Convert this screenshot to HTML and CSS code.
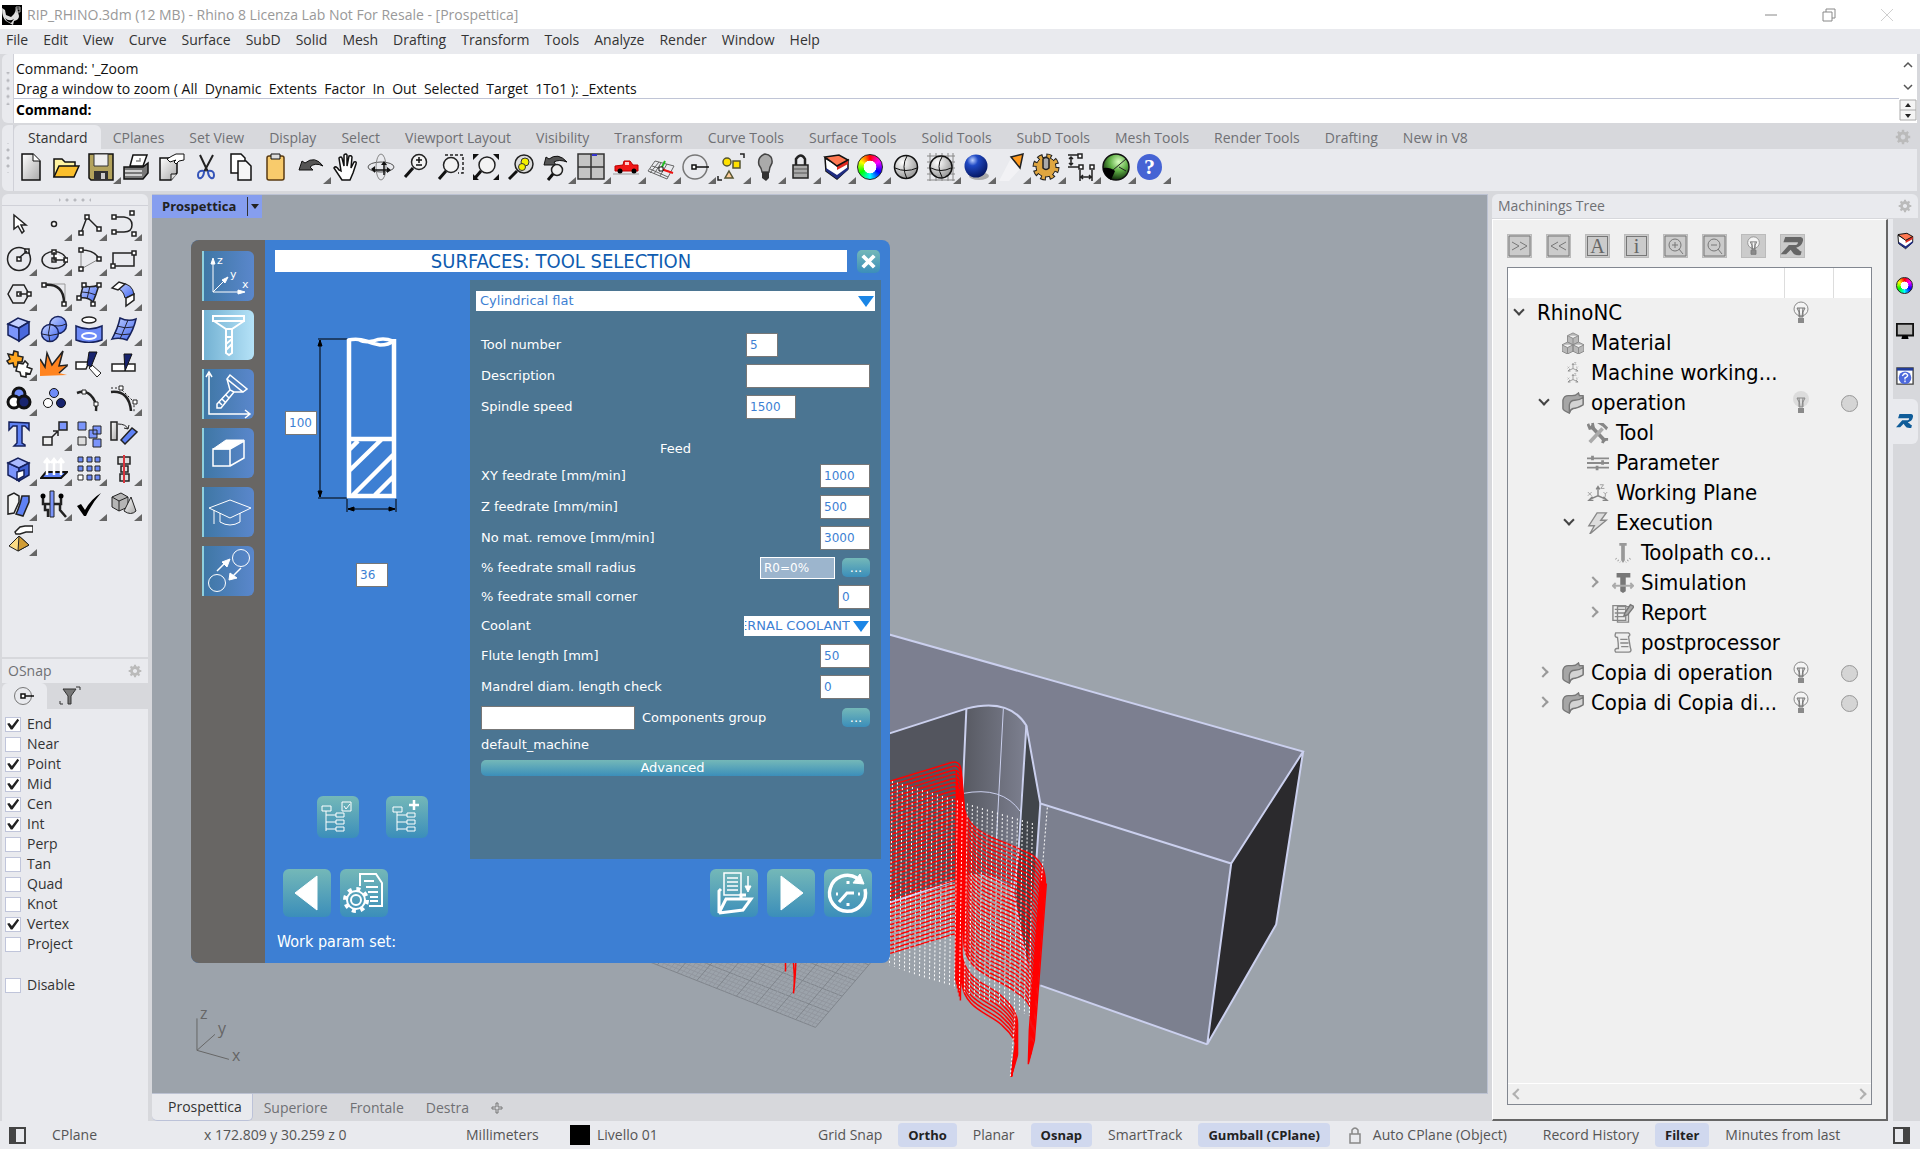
FILE: index.html
```html
<!DOCTYPE html>
<html lang="en">

<head>
    <meta charset="UTF-8">
    <meta name="viewport" content="width=device-width, initial-scale=1.0">
    <title>RIP_RHINO.3dm (12 MB) - Rhino 8 Licenza Lab Not For Resale - [Prospettica]</title>
    <link rel="stylesheet" href="styles.css">
</head>

<body>
    <!-- shared gradients and repeated icons -->
    <svg class="defs" aria-hidden="true">
        <defs>
            <linearGradient id="blueFill" x1="0" y1="0" x2="1" y2="1">
                <stop offset="0" stop-color="#c3d2ff" />
                <stop offset="1" stop-color="#4166f0" />
            </linearGradient>
            <linearGradient id="greyFill" x1="0" y1="0" x2="1" y2="1">
                <stop offset="0" stop-color="#fff" />
                <stop offset="1" stop-color="#a9a9a9" />
            </linearGradient>
            <radialGradient id="ball" cx=".35" cy=".3" r=".8">
                <stop offset="0" stop-color="#fff" />
                <stop offset="1" stop-color="#8d8d8d" />
            </radialGradient>
            <radialGradient id="blueBall" cx=".35" cy=".25" r=".8">
                <stop offset="0" stop-color="#bcd0ff" />
                <stop offset=".3" stop-color="#1f49c4" />
                <stop offset="1" stop-color="#04145e" />
            </radialGradient>
            <radialGradient id="greenBall" cx=".6" cy=".3" r=".7">
                <stop offset="0" stop-color="#d9ffc0" />
                <stop offset=".5" stop-color="#5fae45" />
                <stop offset="1" stop-color="#12300c" />
            </radialGradient>
            <symbol id="gear" viewBox="0 0 20 20">
                <path fill="none" stroke="currentColor" stroke-width="4" d="M10 5a5 5 0 1 1-.01 0z" />
                <path stroke="currentColor" stroke-width="3" d="M10 1v4M10 15v4M1 10h4M15 10h4M3.600 3.600l3 3M13.400 13.400l3 3M3.600 16.400l3-3M13.400 6.600l3-3" />
            </symbol>
            <symbol id="lamp" viewBox="0 0 16 24">
                <circle cx="8" cy="8" r="7" fill="#f4f4f4" stroke="#8a8a8a" />
                <path fill="none" stroke="#777" d="M4 7h8l-2 4v5H6v-5zM6 7l1 9M10 7l-1 9" />
                <path fill="#8a8a8a" d="M5 17h6v5H5z" />
            </symbol>
            <symbol id="lampOff" viewBox="0 0 16 24">
                <circle cx="8" cy="8" r="8" fill="#dcdcdc" />
                <path fill="none" stroke="#888" d="M4 7h8l-2 4v5H6v-5zM6 7l1 9M10 7l-1 9" />
                <path fill="#8a8a8a" d="M5 17h6v5H5z" />
            </symbol>
            <symbol id="operation" viewBox="0 0 24 24">
                <path fill="#a6a6a6" stroke="#777" stroke-width="1.500" d="M1 9Q2 4 7 4h4q4 0 7-3l1 3h4v9q-7 4-11 5-3 0-4 5-7-3-7-5z" />
                <path fill="#d4d4d4" stroke="#777" stroke-width="1.500" d="M8 14q1-5 6-5 5 0 9-3v8q-7 4-11 4-3 1-4 5z" />
            </symbol>
            <symbol id="layers" viewBox="0 0 28 28">
                <path fill="#fff" stroke="#111" stroke-width="1.500" d="M3 5l12 7 11-5v9L15 26 4 18z" />
                <path fill="#1f2c80" d="M4 15l11 7 11-8v3l-11 9-11-8z" />
                <path fill="#e02a20" d="M15 13l11-6v4l-11 6z" />
                <path fill="#ff7952" stroke="#111" stroke-width="1.500" d="M3 4l14-2 9 5-11 6z" />
            </symbol>
            <symbol id="rlogo" viewBox="0 0 26 22">
                <path fill="currentColor" d="M5 1h17q4 1 2 6-1 4-7 6l3 2q1 2 3 2l-1 4q-7 1-9-3l-2-3-5 5H0l9-10h8q2 0 2-3H3z" />
            </symbol>
            <symbol id="axes3" viewBox="0 0 24 20">
                <path fill="none" stroke="#858585" stroke-width="1.500" d="M12 3v10L3 17M12 13l9 4M10 6l2-3 2 3M6 14l-4 4h5M18 14l4 4h-5" />
                <path fill="none" stroke="#999" d="M14 1h4l-3 4h4M1 9l4 4M5 9l-4 4M18 9l2 2 2-2M20 11v3" />
            </symbol>
        </defs>
    </svg>

    <header class="titlebar">
        <svg class="app-icon" viewBox="0 0 20 20">
            <path d="M0 0h20v20H0z" />
            <path fill="#ddd" d="M0 3l3 2 1 5 5 2 3-3 3-6 2 8q0 4-5 5l-1 4-7-4Q0 13 0 3z" />
            <path d="M3 13q4 4 9 1l-3 4-4-2z" />
            <path fill="none" stroke="#aaa" d="M14 2h4v5h-4zM14 4h4" />
        </svg>
        <h1>RIP_RHINO.3dm (12 MB) - Rhino 8 Licenza Lab Not For Resale - [Prospettica]</h1>
        <div class="window-buttons">
            <button aria-label="Minimize"><svg viewBox="0 0 14 14"><path d="M1 7h12" /></svg></button>
            <button aria-label="Restore"><svg viewBox="0 0 14 14"><path d="M1 4h9v9H1zM4 4V1h9v9h-3" /></svg></button>
            <button class="dim" aria-label="Close"><svg viewBox="0 0 14 14"><path d="M1 1l12 12M13 1L1 13" /></svg></button>
        </div>
    </header>

    <nav class="menubar">
        <a href="#">File</a>
        <a href="#">Edit</a>
        <a href="#">View</a>
        <a href="#">Curve</a>
        <a href="#">Surface</a>
        <a href="#">SubD</a>
        <a href="#">Solid</a>
        <a href="#">Mesh</a>
        <a href="#">Drafting</a>
        <a href="#">Transform</a>
        <a href="#">Tools</a>
        <a href="#">Analyze</a>
        <a href="#">Render</a>
        <a href="#">Window</a>
        <a href="#">Help</a>
    </nav>

    <section class="command">
        <div class="grip"></div>
        <div class="command-main">
            <div class="history">
                <p>Command: '_Zoom</p>
                <p>Drag a window to zoom ( All  Dynamic  Extents  Factor  In  Out  Selected  Target  1To1 ): _Extents</p>
            </div>
            <label class="prompt">Command: <input type="text"></label>
        </div>
        <div class="command-scroll">
            <svg viewBox="0 0 18 68">
                <path fill="none" stroke="#555" stroke-width="1.500" d="M5 13l4-4 4 4M5 31l4 4 4-4" />
                <path fill="#f4f4f4" stroke="#aaa" d="M1 46h16v20H1zM1 56h16" />
                <path fill="#222" d="M6 53h6l-3-4zM6 60h6l-3 4z" />
            </svg>
        </div>
    </section>

    <section class="toolbars">
        <div class="grip"></div>
        <div class="toolbars-main">
            <div class="toolbar-tabs">
                <button class="active">Standard</button>
                <button>CPlanes</button>
                <button>Set View</button>
                <button>Display</button>
                <button>Select</button>
                <button>Viewport Layout</button>
                <button>Visibility</button>
                <button>Transform</button>
                <button>Curve Tools</button>
                <button>Surface Tools</button>
                <button>Solid Tools</button>
                <button>SubD Tools</button>
                <button>Mesh Tools</button>
                <button>Render Tools</button>
                <button>Drafting</button>
                <button>New in V8</button>
                <button class="options" aria-label="Toolbar options"><svg><use href="#gear" /></svg></button>
            </div>
            <div class="tools">
                <button title="New"><svg viewBox="0 0 28 28"><path fill="url(#greyFill)" stroke="#111" stroke-width="1.500" d="M5 1h11l7 7v19H5z" /><path fill="#fff" stroke="#111" d="M16 1v7h7" /></svg></button>
                <button title="Open"><svg viewBox="0 0 28 28"><path fill="#fff3a0" stroke="#111" stroke-width="1.500" d="M2 24V6h8l3 3h10v4" /><path fill="#fbbf2c" stroke="#111" stroke-width="1.500" d="M2 24l5-11h20l-5 11z" /></svg></button>
                <button class="more" title="Save"><svg viewBox="0 0 28 28"><path fill="#b3a35c" stroke="#111" stroke-width="1.500" d="M2 1h24v26H4l-2-2z" /><path fill="#eee" stroke="#333" d="M7 1h14v12H7z" /><path fill="#333" d="M7 18h14v9H7z" /><path fill="#ccc" d="M14 20h4v6h-4z" /></svg></button>
                <button title="Print"><svg viewBox="0 0 28 28"><path fill="#fff" stroke="#111" stroke-width="1.500" d="M8 13l3-11h14l-4 11z" /><path fill="#777" stroke="#111" stroke-width="1.500" d="M2 14h19l5-4v10l-5 6H2z" /><path stroke="#eee" stroke-width="1.500" d="M3 18h17M3 22h17" /><path fill="none" stroke="#888" stroke-width="1.500" d="M14 8h4V5" /></svg></button>
                <button title="Notes"><svg viewBox="0 0 28 28"><path fill="url(#greyFill)" stroke="#111" stroke-width="1.500" d="M3 5h17v15l-6 7H3z" /><path fill="#ddd" stroke="#111" d="M14 27v-6h6" /><path fill="#fff" stroke="#111" d="M10 6l5-3 4-2 8 0v6l-5 1-3 3-2-2 2-2-6 2z" /></svg></button>
                <button title="Cut"><svg viewBox="0 0 28 28"><path fill="none" stroke="#222" stroke-width="2" d="M8 2l8 17M21 2l-9 17" /><path fill="none" stroke="#3554b8" stroke-width="2" d="M12 18q-6-1-6 4 0 4 3 3 3-2 3-7M16 18q6-1 6 4 0 4-3 3-3-2-3-7" /></svg></button>
                <button title="Copy"><svg viewBox="0 0 28 28"><path fill="#fff" stroke="#111" stroke-width="1.500" d="M4 1h10l4 4v15H4z" /><path fill="#f5f5f5" stroke="#111" stroke-width="1.500" d="M11 8h8l5 5v14H11z" /></svg></button>
                <button title="Paste"><svg viewBox="0 0 28 28"><rect x="5" y="3" width="17" height="24" rx="2" fill="#f8cb6c" stroke="#5a3b12" stroke-width="1.500" /><path fill="#ddd" stroke="#111" d="M9 1h9v5H9z" /></svg></button>
                <button class="more" title="Undo"><svg viewBox="0 0 28 28"><path fill="#555" stroke="#111" d="M2 17l3-9 3 2q10-8 18 3-8-4-13 1l3 3z" /></svg></button>
                <button title="Pan"><svg viewBox="0 0 28 28"><path fill="#fff" stroke="#111" stroke-width="1.500" d="M10 27l-8-12q2-3 5 2l2 1L7 5q2-2 3 0l2 8 0-11q2-2 3 0v11l2-10q2-1 3 1l-1 11 3-6q3-1 2 2l-3 9-3 7z" /></svg></button>
                <button title="Rotate view"><svg viewBox="0 0 28 28"><g fill="none" stroke="#555"><ellipse cx="14" cy="14" rx="13" ry="5" /><ellipse cx="14" cy="14" rx="5" ry="13" stroke="#888" /></g><path stroke="#111" stroke-width="1.500" d="M8 17h12M17 10v12" /><path fill="#111" d="M8 13v7l-4-4zM14 12h6l-3-4zM20 14v6l4-3z" /></svg></button>
                <button title="Zoom dynamic"><svg viewBox="0 0 28 28"><circle cx="17" cy="9" r="7.500" fill="#f3f3f3" stroke="#222" stroke-width="1.500" /><path stroke="#111" stroke-width="3" d="M11 15l-8 9" /><path stroke="#111" stroke-width="1.500" d="M14 7h6M17 4v6M14 12h6" /></svg></button>
                <button title="Zoom window"><svg viewBox="0 0 28 28"><path fill="none" stroke="#222" stroke-width="1.500" stroke-dasharray="3 2" d="M8 2h18v18h-5" /><circle cx="14" cy="12" r="7.500" fill="#f3f3f3" stroke="#222" stroke-width="1.500" /><path stroke="#111" stroke-width="3" d="M9 18l-7 8" /></svg></button>
                <button title="Zoom extents"><svg viewBox="0 0 28 28"><circle cx="15" cy="12" r="8" fill="#f3f3f3" stroke="#222" stroke-width="1.500" /><path stroke="#111" stroke-width="3" d="M9 18l-6 7" /><path fill="#111" d="M1 1h6L1 7zM27 1h-6l6 6zM1 27h6l-6-6zM27 27h-6l6-6z" /></svg></button>
                <button title="Zoom selected"><svg viewBox="0 0 28 28"><circle cx="17" cy="11" r="9" fill="#ddd" stroke="#222" stroke-width="1.500" /><path stroke="#111" stroke-width="3" d="M10 18l-8 8" /><circle cx="18" cy="9" r="4" fill="#f4f000" stroke="#333" /><circle cx="15" cy="14" r="3.500" fill="#f4f000" stroke="#333" /></svg></button>
                <button class="more" title="Undo view"><svg viewBox="0 0 28 28"><path fill="#555" stroke="#111" d="M2 12l2-8 3 2q9-7 18 3-8-3-13 0l2 3z" /><circle cx="15" cy="17" r="5.500" fill="#eee" stroke="#222" stroke-width="1.500" /><path stroke="#111" stroke-width="3" d="M11 21l-5 6" /></svg></button>
                <button class="more" title="Four views"><svg viewBox="0 0 28 28"><path fill="#c4c4c4" stroke="#333" stroke-width="1.500" d="M1 1h26v25H1zM14 1v25M1 14h26" /><path stroke="#33c" stroke-width="2" d="M15 2h5" /></svg></button>
                <button class="more" title="Set view"><svg viewBox="0 0 28 28"><path stroke="#999" d="M1 21h26" /><path fill="#f01818" stroke="#b00" d="M3 18v-5l8-1 1-4h6l3 4h5v6z" /><path fill="#fcc" d="M13 9h4v3h-4z" /><circle cx="8" cy="18" r="2.500" /><circle cx="22" cy="18" r="2.500" /></svg></button>
                <button class="more" title="CPlane"><svg viewBox="0 0 28 28"><path fill="none" stroke="#666" d="M8 8l19 5-7 13L1 18zM14 10L7 21M20 11l-7 12M5 13l19 6M12 9L3 20M3 16l18 8" /><path stroke="#e11" stroke-width="2" d="M14 16l12 4" /><path stroke="#2b2" stroke-width="2" d="M14 16l4-8" /><path fill="#fff" stroke="#111" d="M12 14h4v4h-4z" /></svg></button>
                <button class="more" title="Object snap"><svg viewBox="0 0 28 28"><circle cx="13" cy="14" r="12" fill="none" stroke="#777" stroke-width="1.500" /><path fill="#fff" stroke="#111" stroke-width="1.500" d="M10 12h4v4h-4zM14 14h13" /></svg></button>
                <button class="more" title="Select"><svg viewBox="0 0 28 28"><path fill="none" stroke="#222" stroke-width="1.500" d="M23 1h4v4M1 23v4h4" /><g fill="#ffe100" stroke="#553" stroke-width="1.500"><circle cx="10" cy="9" r="4" /><path d="M16 8h7v7h-7z" /><path fill="#fc9" d="M12 18l4 7H8z" /></g></svg></button>
                <button class="more" title="Hide"><svg viewBox="0 0 28 28"><path fill="#aaa" stroke="#444" stroke-width="1.500" d="M10 19q0-3-3-7-2-8 6-11 8 1 7 9-3 5-3 9z" /><path fill="#333" d="M10 19h7v6l-3 3-4-3z" /></svg></button>
                <button class="more" title="Lock"><svg viewBox="0 0 28 28"><path fill="none" stroke="#222" stroke-width="2.500" d="M9 13V6q5-7 9 0v7" /><path fill="#aaa" stroke="#222" stroke-width="1.500" d="M6 12h15v13H6z" /><path stroke="#555" d="M7 16h13M7 20h13" /></svg></button>
                <button class="more" title="Layers"><svg><use href="#layers" /></svg></button>
                <button class="more" title="Properties"><span class="wheel"></span></button>
                <button title="Shade"><svg viewBox="0 0 28 28"><circle cx="14" cy="14" r="11.500" fill="url(#ball)" stroke="#111" stroke-width="1.500" /><path fill="none" stroke="#111" d="M3 15q11 5 22 0M15 3q-6 10 0 23" /></svg></button>
                <button class="more" title="Shade grid"><svg viewBox="0 0 28 28"><path stroke="#888" d="M0 3h28M0 9h28M0 15h28M0 21h28M0 27h28M3 0v28M9 0v28M15 0v28M21 0v28M26 0v28" /><circle cx="14" cy="14" r="11" fill="url(#ball)" stroke="#111" stroke-width="1.500" /><path fill="none" stroke="#111" d="M4 15q10 5 20 0M15 4q-6 9 0 20" /></svg></button>
                <button class="more" title="Render"><svg viewBox="0 0 28 28"><ellipse cx="17" cy="23" rx="10" ry="4" fill="#aaa" /><circle cx="14" cy="13" r="11.500" fill="url(#blueBall)" /></svg></button>
                <button class="more" title="Spotlight"><svg viewBox="0 0 28 28"><path fill="#fff" opacity=".4" d="M14 5L2 28h10l11-12z" /><path fill="#ff9a1e" stroke="#222" stroke-width="1.500" d="M14 4l12-3-3 14z" /></svg></button>
                <button class="more" title="Options"><svg viewBox="0 0 28 28"><circle cx="14" cy="14" r="10.500" fill="none" stroke="#222" stroke-width="6" stroke-dasharray="5 3.240" /><circle cx="14" cy="14" r="10" fill="#dfa640" stroke="#222" /><circle cx="14" cy="14" r="10.500" fill="none" stroke="#dfa640" stroke-width="4" stroke-dasharray="3 5.240" stroke-dashoffset="-1" /><path fill="#aaa" stroke="#222" stroke-width="1.500" d="M11 15V6q3-3 6 0v9q-3 3-6 0z" /></svg></button>
                <button class="more" title="Dimension"><svg viewBox="0 0 28 28"><path fill="none" stroke="#222" stroke-width="1.500" d="M1 2h10M1 14h12M4 4v8M2 6l2-2 2 2M2 10l2 2 2-2M13 17v11M25 17v11M14 24h10M16 22l-2 2 2 2M22 22l2 2-2 2" /><path fill="#fff" stroke="#222" stroke-width="1.500" d="M11 1h4v4h-4zM12 12h4v4h-4zM23 12h4v4h-4z" /></svg></button>
                <button class="more" title="Grasshopper"><svg viewBox="0 0 28 28"><circle cx="14" cy="14" r="13" fill="url(#greenBall)" stroke="#111" stroke-width="1.500" /><path d="M1 15q7-1 12 3l-4 9Q2 23 1 15z" /><path fill="none" stroke="#222" d="M11 17L24 6M17 14l7 4" /></svg></button>
                <button class="more help" title="Help"><span>?</span></button>
            </div>
        </div>
    </section>

    <main class="workspace">
        <aside class="sidebar">
            <div class="side-grip"></div>
            <div class="palette">
                <button title="Select"><svg viewBox="0 0 28 28"><path fill="#fff" stroke="#222" stroke-width="1.500" d="M9 5v14l4-3 4 7 2-2-3-6h5z" /></svg></button>
                <button class="more" title="Point"><svg viewBox="0 0 28 28"><circle cx="14" cy="14" r="2.500" fill="#fff" stroke="#222" stroke-width="1.500" /></svg></button>
                <button class="more" title="Polyline"><svg viewBox="0 0 28 28"><path fill="none" stroke="#222" stroke-width="1.500" d="M6 23l6-16 12 12" /><path fill="#fff" stroke="#222" stroke-width="1.500" d="M4 21h4v4H4zM10 5h4v4h-4zM22 17h4v4h-4z" /></svg></button>
                <button class="more" title="Curve"><svg viewBox="0 0 28 28"><path fill="none" stroke="#222" stroke-width="1.500" d="M4 7h10q8 1 8 8t-8 7H4" /><path fill="#fff" stroke="#222" stroke-width="1.500" d="M2 5h4v4H2zM2 20h4v4H2zM20 1h4v4h-4zM22 22h4v4h-4z" /></svg></button>
                <button class="more" title="Circle"><svg viewBox="0 0 28 28"><circle cx="14" cy="14" r="11.500" fill="none" stroke="#222" stroke-width="1.500" /><path fill="#fff" stroke="#222" stroke-width="1.500" d="M14 13l8-7M12 12h4v4h-4zM20 4h4v4h-4z" /></svg></button>
                <button class="more" title="Ellipse"><svg viewBox="0 0 28 28"><ellipse cx="14" cy="15" rx="12" ry="8.500" fill="none" stroke="#222" stroke-width="1.500" /><path fill="#fff" stroke="#222" stroke-width="1.500" d="M14 7v8h11M12 5h4v4h-4zM12 13h4v4h-4zM24 13h4v4h-4z" /></svg></button>
                <button class="more" title="Arc"><svg viewBox="0 0 28 28"><path fill="none" stroke="#888" d="M6 5v19l18-10" /><path fill="none" stroke="#222" stroke-width="1.500" d="M6 5q14 0 18 9" /><path fill="#fff" stroke="#222" stroke-width="1.500" d="M4 3h4v4H4zM4 22h4v4H4zM22 12h4v4h-4z" /></svg></button>
                <button class="more" title="Rectangle"><svg viewBox="0 0 28 28"><path fill="none" stroke="#222" stroke-width="1.500" d="M3 8h21v13H3z" /><path fill="#fff" stroke="#222" stroke-width="1.500" d="M1 19h4v4H1zM22 6h4v4h-4z" /></svg></button>
                <button class="more" title="Polygon"><svg viewBox="0 0 28 28"><path fill="none" stroke="#222" stroke-width="1.500" d="M3 14l5-9h11l5 9-5 9H8z" /><path fill="#fff" stroke="#222" stroke-width="1.500" d="M14 14h8M12 12h4v4h-4zM22 12h4v4h-4z" /></svg></button>
                <button class="more" title="Fillet"><svg viewBox="0 0 28 28"><path fill="none" stroke="#999" d="M4 4h21v20" /><path fill="none" stroke="#222" stroke-width="2.500" d="M4 5q20-2 20 18" /><path fill="#fff" stroke="#222" stroke-width="1.500" d="M2 3h4v4H2zM22 22h4v4h-4z" /></svg></button>
                <button class="more" title="Surface from points"><svg viewBox="0 0 28 28"><path fill="url(#blueFill)" stroke="#222" stroke-width="1.500" d="M8 6q8 2 16-1-3 10-6 17-5-5-13-4z" /><path fill="none" stroke="#223" d="M15 6l-3 13M7 12q7 0 14 3" /><path fill="#fff" stroke="#222" stroke-width="1.500" d="M7 3h4v4H7zM22 3h4v4h-4zM2 16h4v4H2zM16 22h4v4h-4z" /></svg></button>
                <button class="more" title="Loft"><svg viewBox="0 0 28 28"><path fill="url(#blueFill)" stroke="#222" d="M9 3q14 0 15 12l-9 3Q13 9 7 9z" /><path fill="#fff" stroke="#222" stroke-width="1.500" d="M2 8l7-6 6 2-7 6zM24 14v6l-8 6v-8z" /></svg></button>
                <button class="more" title="Box"><svg viewBox="0 0 28 28"><g stroke="#16225c" stroke-width="1.500"><path fill="#7b95fb" d="M3 9v11l11 6V13z" /><path fill="#c3d0ff" d="M3 9l10-6 11 4-10 6z" /><path fill="#4a69dd" d="M14 13v13l10-7V7z" /></g></svg></button>
                <button class="more" title="Sphere"><svg viewBox="0 0 28 28"><g fill="url(#blueFill)" stroke="#16225c" stroke-width="1.500"><circle cx="18" cy="10" r="8.500" /><circle cx="10" cy="18" r="8.500" /></g><path fill="none" stroke="#223" d="M2 19q8 3 16 0M10 10q-3 8 0 17M10 9q8 4 16 0" /></svg></button>
                <button class="more" title="Cylinder"><svg viewBox="0 0 28 28"><ellipse cx="14" cy="5" rx="7" ry="3" fill="#fff" stroke="#222" stroke-width="1.500" /><path fill="#6f8cf8" stroke="#16225c" stroke-width="1.500" d="M1 11q13 6 26 0v14q-13 5-26 0z" /><ellipse cx="14" cy="21" rx="7" ry="3" fill="none" stroke="#fff" stroke-width="2" /></svg></button>
                <button class="more" title="Patch"><svg viewBox="0 0 28 28"><path fill="url(#blueFill)" stroke="#16225c" stroke-width="1.500" d="M10 3q8 4 16 1-2 10-9 21-7-3-15-1Q8 13 10 3z" /><path fill="none" stroke="#223" d="M18 5l-8 19M7 11q8 3 16 1M4 18q8 3 16 1" /></svg></button>
                <button class="more" title="Blocks"><svg viewBox="0 0 28 28"><path fill="#ffa61e" stroke="#222" stroke-width="1.500" d="M3 4l5 1 1-4 4 1v4l5 1-1 5-4 0 1 5-5 0-1-4-4 1-2-3 3-2z" /><path fill="#fff" stroke="#222" stroke-width="1.500" d="M13 13l5 1 2-3 3 3-1 3 5 2-2 5-4-1 0 4-5-1-1-4-4-1z" /></svg></button>
                <button title="Explode"><svg viewBox="0 0 28 28"><path fill="#ff8420" d="M0 26V9l5 8 2-14 5 12L23 1l-4 15 9-1-9 8 8 2z" /><path fill="none" stroke="#222" stroke-width="1.500" d="M0 9l5 8L7 3l5 12L23 1l-4 15 9-1-9 8" /></svg></button>
                <button title="Trim"><svg viewBox="0 0 28 28"><path fill="#fff" stroke="#222" stroke-width="1.500" d="M1 12h13l-3 7H1z" /><path fill="#fff" stroke="#222" d="M17 15l9 8-4 4-8-9z" /><path fill="#18246e" stroke="#111" d="M14 2h8l-6 15-4-2z" /></svg></button>
                <button title="Split"><svg viewBox="0 0 28 28"><path fill="#fff" stroke="#222" stroke-width="1.500" d="M2 14h23v7H2z" /><path fill="#18246e" stroke="#111" d="M14 4h8l-7 17z" /></svg></button>
                <button class="more" title="Boolean"><svg viewBox="0 0 28 28"><g stroke="#111" stroke-width="3"><circle cx="14" cy="9" r="6" fill="#6f8cf8" /><circle cx="9" cy="17" r="6" fill="#fff" /><circle cx="19" cy="17" r="6" fill="#18246e" /></g></svg></button>
                <button title="Group"><svg viewBox="0 0 28 28"><g stroke="#111"><circle cx="14" cy="8" r="4.500" fill="#6f8cf8" /><circle cx="8" cy="18" r="4.500" fill="#fff" /><circle cx="21" cy="18" r="4.500" fill="#18246e" /></g></svg></button>
                <button title="Edit points"><svg viewBox="0 0 28 28"><path fill="none" stroke="#222" stroke-width="2.500" d="M2 8q10-4 16 5 4 6 3 13" /><path fill="#fff" stroke="#222" d="M7 5h4v4H7zM19 17h4v4h-4z" /></svg></button>
                <button class="more" title="Control points"><svg viewBox="0 0 28 28"><path fill="none" stroke="#222" stroke-width="2.500" d="M1 7q18-2 20 19" /><path fill="none" stroke="#222" stroke-dasharray="2 2" d="M1 3h9l14 14v10" /><path fill="#fff" stroke="#222" d="M9 1h4v4H9zM23 15h4v4h-4z" /></svg></button>
                <button title="Text"><svg viewBox="0 0 28 28"><path fill="#5f82f5" stroke="#16225c" stroke-width="1.500" d="M4 2l20 1v7l-4-4-3 0v17l3 2v1H9l3-3V6H8l-4 4z" /></svg></button>
                <button class="more" title="Move"><svg viewBox="0 0 28 28"><path fill="#eee" stroke="#222" stroke-width="1.500" d="M3 17h9v8H3z" /><path fill="#7b95fb" stroke="#222" stroke-width="1.500" d="M19 2h8v8h-8z" /><path fill="none" stroke="#222" stroke-width="1.500" d="M12 17l6-6M13 11h5v5" /></svg></button>
                <button title="Copy"><svg viewBox="0 0 28 28"><g fill="#7b95fb" stroke="#222"><path d="M3 2h8v8H3zM18 6h8v8h-8zM14 10h8v8h-8zM18 19h8v8h-8z" /><path fill="#ddd" d="M3 17h8v8H3z" /></g></svg></button>
                <button title="Rotate"><svg viewBox="0 0 28 28"><path fill="url(#greyFill)" stroke="#222" stroke-width="1.500" d="M1 2h6v18H1z" /><path fill="#5f82f5" stroke="#222" stroke-width="1.500" d="M11 20L22 8l5 4-12 12z" /><path fill="none" stroke="#222" d="M8 4q8 0 10 5M19 5l-1 4-4-1" /></svg></button>
                <button class="more" title="Solid tools"><svg viewBox="0 0 28 28"><g stroke="#16225c" stroke-width="1.500"><path fill="#7b95fb" d="M3 8v12l11 6V13z" /><path fill="#a9baff" d="M3 8l10-5 11 5-10 5z" /><path fill="#3f5fd0" d="M14 13v13l10-6V8z" /><path fill="#fff" d="M12 17l7-2v6l-7 4z" /></g></svg></button>
                <button class="more" title="Extrude"><svg viewBox="0 0 28 28"><path fill="#5f82f5" stroke="#111" stroke-width="2" d="M6 17h21l-6 6H1z" /><path fill="none" stroke="#fff" stroke-width="2.500" d="M7 20V5M14 20V5M21 20V5M4 8l3-4 3 4M11 8l3-4 3 4M18 8l3-4 3 4" /></svg></button>
                <button class="more" title="Array"><svg viewBox="0 0 28 28"><g fill="#6d8af6" stroke="#222"><path d="M3 2h5v5H3zM12 2h5v5h-5zM20 2h5v5h-5zM3 11h5v5H3zM12 11h5v5h-5zM20 11h5v5h-5zM12 20h5v5h-5zM20 20h5v5h-5z" /><path fill="#fff" d="M3 20h5v5H3z" /></g></svg></button>
                <button class="more" title="Align"><svg viewBox="0 0 28 28"><g fill="#ddd" stroke="#222" stroke-width="1.500"><path d="M8 2h12v7H8zM11 11h7v6h-7zM10 19h9v7h-9z" /></g><path stroke="#d8343c" stroke-width="2" d="M14 0v28" /></svg></button>
                <button class="more" title="Bend"><svg viewBox="0 0 28 28"><path fill="#f4f4f4" stroke="#222" stroke-width="1.500" d="M3 6l6-3 5 3v6l-5 11-6 1z" /><path fill="#5f82f5" stroke="#222" stroke-width="1.500" d="M17 6l7 0 0 6-6 14-7-2q4-8 6-18z" /></svg></button>
                <button class="more" title="Analyze"><svg viewBox="0 0 28 28"><path fill="none" stroke="#222" stroke-width="2.500" d="M3 8v6h18v-6M5 14v6l3 0v7M20 14v6l6 7" /><circle cx="3" cy="6" r="2.500" /><circle cx="21" cy="6" r="2.500" /><path fill="#7b95fb" stroke="#222" d="M10 1h4v26h-4z" /></svg></button>
                <button class="more" title="Check"><svg viewBox="0 0 28 28"><path d="M2 16l4-2 4 6Q16 9 26 3 17 13 11 26H9z" /></svg></button>
                <button class="more" title="Mesh"><svg viewBox="0 0 28 28"><path fill="#b5b5b5" stroke="#222" d="M2 7l9-4 7 4v10l-9 4-7-4zM2 7l7 4v10M9 11l9-4" /><path fill="url(#greyFill)" stroke="#222" d="M21 7l5 14q-5 5-12 0z" /></svg></button>
                <button class="more" title="Drag"><svg viewBox="0 0 28 28"><path fill="#fff" stroke="#222" stroke-width="1.500" d="M10 7l5-5 5-1 8 0v6l-7 0-6 2h-4z" /><path fill="#fbdc85" stroke="#222" d="M14 11l-10 10 9 5 11-6z" /><path fill="#d19d35" stroke="#222" d="M14 11l-1 15 11-6z" /></svg></button>
            </div>

            <section class="osnap">
                <h2>OSnap <svg><use href="#gear" /></svg></h2>
                <div class="osnap-tabs">
                    <button class="active" aria-label="Object snaps"><svg viewBox="0 0 24 20"><circle cx="10" cy="10" r="8.500" fill="none" stroke="#777" /><path fill="#fff" stroke="#111" stroke-width="1.500" d="M8 8h4v4H8zM12 10h9" /></svg></button>
                    <button aria-label="Filters"><svg viewBox="0 0 24 20"><path fill="#777" stroke="#333" d="M5 3h13l-5 7v8h-3v-8z" /><path fill="none" stroke="#333" d="M18 1h4v3M2 15v3h3" /></svg></button>
                </div>
                <ul>
                    <li><label><input type="checkbox" checked> End</label></li>
                    <li><label><input type="checkbox"> Near</label></li>
                    <li><label><input type="checkbox" checked> Point</label></li>
                    <li><label><input type="checkbox" checked> Mid</label></li>
                    <li><label><input type="checkbox" checked> Cen</label></li>
                    <li><label><input type="checkbox" checked> Int</label></li>
                    <li><label><input type="checkbox"> Perp</label></li>
                    <li><label><input type="checkbox"> Tan</label></li>
                    <li><label><input type="checkbox"> Quad</label></li>
                    <li><label><input type="checkbox"> Knot</label></li>
                    <li><label><input type="checkbox" checked> Vertex</label></li>
                    <li><label><input type="checkbox"> Project</label></li>
                    <li class="disable"><label><input type="checkbox"> Disable</label></li>
                </ul>
            </section>
        </aside>

        <section class="views">
            <div class="viewport">
                <svg id="scene" viewBox="152 194 1336 900" preserveAspectRatio="xMinYMin slice">
                    <defs>
                        <linearGradient id="pocket" x1="0" x2="1">
                            <stop offset="0" stop-color="#55575f" />
                            <stop offset="1" stop-color="#7d8090" />
                        </linearGradient>
                    </defs>
                    <g id="grid"></g>
                    <path fill="#7c7f90" d="M880 631L1304 751 1232 863 1041 803 1027 725Q1014 704 986 705L967 708 880 736z" />
                    <path fill="#7c808f" d="M1041 803L1232 863 1208 1044 1041 985 1028 967z" />
                    <path fill="#2b2a2d" d="M1304 751L1277 924 1208 1044 1232 863z" />
                    <path fill="#53555e" d="M880 736L967 708 962 880 880 906z" />
                    <path fill="url(#pocket)" d="M967 708Q1010 696 1027 725L1014 890Q990 868 960 877z" />
                    <path fill="#41454b" d="M1027 725L1041 803 1028 967 1014 890z" />
                    <g class="edges">
                        <path d="M880 631L1304 751 1232 863 1041 803 1027 725Q1010 697 967 708L880 736M1304 751L1277 924 1208 1044 1232 863M1208 1044L1041 985" />
                        <path d="M1041 803L1037 860M1027 725L1019 853 1014 893 1028 967M967 708L963 797M880 906L955 880" />
                        <path class="thin" d="M1004 708L997 840M963 793Q1003 785 1021 811M960 877Q990 868 1014 890" />
                    </g>
                    <g id="toolpath"></g>
                    <g class="axis">
                        <path d="M197 1018V1050L215 1034M197 1050L229 1059" />
                        <text x="200" y="1019">z</text>
                        <text x="218" y="1034">y</text>
                        <text x="232" y="1061">x</text>
                    </g>
                </svg>
                <button class="view-name"><span>Prospettica</span><i></i></button>

                <section class="dialog">
                    <nav class="steps">
                        <button aria-label="Origin"><svg viewBox="0 0 50 50"><path d="M9 41V13M9 41h27M9 41l12-12" /><path class="solid" d="M7 13l2-6 2 6zM34 39l7 2-7 2zM18 29l6-3-3 6z" /><text x="13" y="13">z</text><text x="26" y="27">y</text><text x="38" y="37">x</text></svg></button>
                        <button class="active" aria-label="Tool"><svg viewBox="0 0 50 50"><path stroke-width="2" d="M9 6h31v5H9zM10 11l12 8h6l12-8M22 19v24l3 2 3-2V19M22 27h6M22 34l6-5M22 40l6-6" /></svg></button>
                        <button aria-label="Tool position"><svg viewBox="0 0 50 50"><path stroke-width="1.500" d="M5 5v40h40M2 8l3-5 3 5M41 41l5 4-5 4M23 10l3-4 17 14-4 3zM23 10l3 11 4 2 9 0M26 21L13 35v4h4l13-16M22 26l3 3M18 30l3 3M15 33l3 3" /></svg></button>
                        <button aria-label="Stock"><svg viewBox="0 0 50 50"><path stroke-width="1.500" d="M9 21h17v17H9zM26 21l14-8v17l-14 8" /><path class="solid" d="M9 21l13-9h18l-14 9z" /></svg></button>
                        <button aria-label="Training"><svg viewBox="0 0 50 50"><path d="M5 21l21-8 21 8-21 10zM16 26v9q10 6 20 0v-9M10 23v14" /></svg></button>
                        <button aria-label="Swap"><svg viewBox="0 0 50 50"><circle cx="37" cy="12" r="8.500" /><circle cx="13" cy="37" r="8.500" /><path stroke-width="1.500" d="M13 25l8-8M37 22l-8 8" /><path class="solid" d="M18 16l8-3-3 8zM26 27l-1 7 8-2z" /></svg></button>
                    </nav>
                    <div class="dialog-main">
                        <header>
                            <h2>SURFACES: TOOL SELECTION</h2>
                            <button class="close" aria-label="Close"><svg viewBox="0 0 24 24"><path d="M6 6l12 12M18 6L6 18" /></svg></button>
                        </header>
                        <div class="dialog-body">
                            <div class="sketch">
                                <div class="cutter">
                                    <input class="field" aria-label="Length" value="100">
                                    <svg viewBox="0 0 80 176">
                                        <path class="dimension" d="M1 2h29M1 161h29M3 3v157M30 162v13M79 162v13M31 172h47" />
                                        <path class="arrows" d="M1 9l2-6 2 6zM1 154l2 6 2-6zM37 170l-6 2 6 2zM72 170l6 2-6 2z" />
                                        <g stroke-width="4.500">
                                            <path d="M32 2v157h45V2M32 102h45M32 134l33-32M32 113l9-9M36 158l41-41M58 158l19-19" />
                                            <path stroke-width="3.500" d="M31 3q10-2 18 1 8 3 14 4 9 0 13-4-10-4-20 0-8 2-14-1" />
                                        </g>
                                    </svg>
                                </div>
                                <input class="field" aria-label="Diameter" value="36">
                                <div class="tree-buttons">
                                    <button aria-label="Update tree"><svg viewBox="0 0 42 42"><path d="M5 10h9v5H5zM9 15v20M9 19h10M9 26h10M9 33h10M19 17h8v4h-8zM19 24h8v4h-8zM19 31h8v4h-8zM25 6h9v9h-9zM27 10l2 3 4-5" /></svg></button>
                                    <button aria-label="Add to tree"><svg viewBox="0 0 42 42"><path d="M7 11h9v5H7zM11 16v19M11 19h10M11 26h10M11 33h10M21 17h8v4h-8zM21 24h8v4h-8zM21 31h8v4h-8z" /><path stroke-width="2.500" d="M28 4v10M23 9h10" /></svg></button>
                                </div>
                            </div>
                            <form class="params">
                                <div class="dropdown">
                                    <select aria-label="Tool type"><option>Cylindrical flat</option></select>
                                </div>
                                <div class="row first"><label for="toolNumber">Tool number</label><span class="wide"><input class="field" id="toolNumber" value="5"></span></div>
                                <div class="row"><label for="description">Description</label><span class="wide"><input class="field full" id="description"></span></div>
                                <div class="row"><label for="spindle">Spindle speed</label><span class="wide"><input class="field number" id="spindle" value="1500"></span></div>
                                <h3>Feed</h3>
                                <div class="row"><label for="xy">XY feedrate [mm/min]</label><input class="field number" id="xy" value="1000"></div>
                                <div class="row"><label for="z">Z feedrate [mm/min]</label><input class="field number" id="z" value="500"></div>
                                <div class="row"><label for="rapid">No mat. remove [mm/min]</label><input class="field number" id="rapid" value="3000"></div>
                                <div class="row low"><label for="radius">% feedrate small radius</label><input class="field locked" id="radius" value="R0=0%" readonly><button type="button" class="dots">...</button></div>
                                <div class="row low"><label for="corner">% feedrate small corner</label><input class="field" id="corner" value="0"></div>
                                <div class="row low"><label for="coolant">Coolant</label>
                                    <div class="dropdown coolant"><select id="coolant"><option>EXTERNAL COOLANT</option></select></div>
                                </div>
                                <div class="row"><label for="flute">Flute length [mm]</label><input class="field number" id="flute" value="50"></div>
                                <div class="row"><label for="mandrel">Mandrel diam. length check</label><input class="field number" id="mandrel" value="0"></div>
                                <div class="row"><input class="field group" id="group"><label for="group">Components group</label><button type="button" class="dots">...</button></div>
                                <p>default_machine</p>
                                <button type="button" class="advanced">Advanced</button>
                            </form>
                        </div>
                        <div class="actions">
                            <button aria-label="Back"><svg viewBox="0 0 48 48"><path class="solid" d="M12 24L34 7v34z" /></svg></button>
                            <button aria-label="Settings"><svg viewBox="0 0 48 48"><path stroke-width="2" d="M20 17V5h16l6 9v23H29M24 12h10M26 18h12M28 23h10M30 28h8M30 32h8" /><circle cx="16" cy="31" r="5" stroke-width="2" /><circle cx="16" cy="31" r="9" stroke-width="2" /><circle cx="16" cy="31" r="11" stroke-width="4" stroke-dasharray="4 4.640" /></svg></button>
                            <span class="spacer"></span>
                            <button aria-label="Load"><svg viewBox="0 0 48 48"><path stroke-width="1.500" d="M14 4h17v22H14zM17 9h11M17 13h11M17 17h11M17 21h11M38 7v14" /><path stroke-width="3" d="M11 20l-2 2v22l7-14h25l-8 11-24 3M31 30v-4h5" /><path class="solid" d="M35 17l3 6 3-6z" /></svg></button>
                            <button aria-label="Next"><svg viewBox="0 0 48 48"><path class="solid" d="M14 7v34l22-17z" /></svg></button>
                            <button aria-label="Compute"><svg viewBox="0 0 48 48"><path stroke-width="3.500" d="M33 9A18 18 0 1 0 41 20" /><path stroke-width="3" d="M15 33l8-9h7" /><path class="solid" d="M36 5l4 10-11-1z" /><path stroke-width="3" d="M24 12v3M24 34v3M12 25h2M34 25h2" /></svg></button>
                        </div>
                        <p class="param-set">Work param set:</p>
                    </div>
                </section>
            </div>
            <nav class="view-tabs">
                <button class="active">Prospettica</button>
                <button>Superiore</button>
                <button>Frontale</button>
                <button>Destra</button>
                <button aria-label="Add viewport"><svg viewBox="0 0 12 12"><path d="M5 1h2v4h4v2H7v4H5V7H1V5h4z" /></svg></button>
            </nav>
        </section>

        <aside class="machinings">
            <h2>Machinings Tree <svg><use href="#gear" /></svg></h2>
            <div class="machinings-body">
                <div class="tree-panel">
                    <div class="tree-tools">
                        <button title="Expand"><svg viewBox="0 0 25 24"><path d="M2 2h21v20H2zM5 8l7 4-7 4M13 8l7 4-7 4" /></svg></button>
                        <button title="Collapse"><svg viewBox="0 0 25 24"><path d="M2 2h21v20H2zM12 8l-7 4 7 4M20 8l-7 4 7 4" /></svg></button>
                        <button title="Rename"><b>A</b></button>
                        <button title="Info"><b>i</b></button>
                        <button title="Zoom in"><svg viewBox="0 0 25 24"><path d="M2 2h21v20H2zM16 15l4 5M9 11h6M12 8v6" /><circle cx="12" cy="11" r="6" /></svg></button>
                        <button title="Zoom out"><svg viewBox="0 0 25 24"><path d="M2 2h21v20H2zM16 15l4 5M9 11h6" /><circle cx="12" cy="11" r="6" /></svg></button>
                        <button title="Visibility"><svg class="small-lamp"><use href="#lamp" /></svg></button>
                        <button title="RhinoNC"><svg class="small-logo"><use href="#rlogo" /></svg></button>
                    </div>
                    <div class="tree">
                        <table>
                            <thead>
                                <tr><th></th><th></th><th></th></tr>
                            </thead>
                            <tbody>
                                <tr><td><span class="open"></span>RhinoNC</td><td><svg><use href="#lamp" /></svg></td><td></td></tr>
                                <tr class="level1"><td><span></span><svg viewBox="0 0 24 24"><g fill="#b8b8b8" stroke="#888"><path d="M12 1l6 3v7l-6 3-6-3V4zM6 4l6 3 6-3M12 7v7" /><path d="M6 11l6 3v7l-6 3-6-3v-7zM0 14l6 3 6-3M6 17v7M18 11l6 3v7l-6 3-6-3v-7zM12 14l6 3 6-3M18 17v7" /></g></svg>Material</td><td></td><td></td></tr>
                                <tr class="level1"><td><span></span><svg viewBox="0 0 24 24"><use href="#axes3" x="5" y="0" width="14" height="11" /><use href="#axes3" x="5" y="12" width="14" height="11" /></svg>Machine working...</td><td></td><td></td></tr>
                                <tr class="level1"><td><span class="open"></span><svg><use href="#operation" /></svg>operation</td><td><svg><use href="#lampOff" /></svg></td><td><i></i></td></tr>
                                <tr class="level2"><td><span></span><svg viewBox="0 0 24 24"><path fill="none" stroke="#858585" stroke-width="4" d="M4 4l16 17" /><path fill="none" stroke="#858585" stroke-width="3" d="M1 2l2 5 4-1-1-5M23 19l-5 0-1 4" /><path stroke="#aaa" stroke-width="4" d="M3 22L17 7" /><path fill="#888" d="M11 1h7l5 5-2 3-4-4z" /></svg>Tool</td><td></td><td></td></tr>
                                <tr class="level2"><td><span></span><svg viewBox="0 0 24 24"><path fill="none" stroke="#8b8b8b" stroke-width="2" d="M0 7h24M0 12h24M0 17h24" /><path stroke="#8b8b8b" stroke-width="3" d="M6 4v5M17 9v5M11 15v5" /></svg>Parameter</td><td></td><td></td></tr>
                                <tr class="level2"><td><span></span><svg><use href="#axes3" /></svg>Working Plane</td><td></td><td></td></tr>
                                <tr class="level2"><td><span class="open"></span><svg viewBox="0 0 24 24"><path fill="#ddd" stroke="#888" stroke-width="1.500" d="M11 1h10l-6 8h6L3 24l5-9H2z" /></svg>Execution</td><td></td><td></td></tr>
                                <tr class="level3"><td><span></span><svg viewBox="0 0 24 24"><path fill="#999" d="M8 1h8v3h-2v16l-2 3-2-3V4H8z" /><path fill="none" stroke="#999" stroke-width="2" stroke-dasharray="1 2" d="M4 18l5 4M20 18l-5 4" /></svg>Toolpath co...</td><td></td><td></td></tr>
                                <tr class="level3"><td><span class="closed"></span><svg viewBox="0 0 24 24"><path fill="#777" d="M5 1h15v5h-5v15l-3 2-3-2V6H5z" /><path fill="none" stroke="#aaa" stroke-width="2" d="M1 15h22M4 12l-3 3 3 3M20 12l3 3-3 3" /></svg>Simulation</td><td></td><td></td></tr>
                                <tr class="level3"><td><span class="closed"></span><svg viewBox="0 0 24 24"><path fill="#eee" stroke="#888" stroke-width="1.500" d="M1 4h14v16H1zM6 5h12v17H6zM3 8h11M3 12h11M3 16h11" /><path fill="#aaa" stroke="#777" stroke-width="1.500" d="M14 12l6-9 4 2-7 9-4 1z" /></svg>Report</td><td></td><td></td></tr>
                                <tr class="level3"><td><span></span><svg viewBox="0 0 24 24"><path fill="#eee" stroke="#888" stroke-width="1.500" d="M4 1h14q3 2 0 4 1 6 2 12 2 5-2 5H4q-2-3 1-4h2Q7 12 6 6 2 6 4 1zM9 8h8M9 12h9M10 16h8" /></svg>postprocessor</td><td></td><td></td></tr>
                                <tr class="level1"><td><span class="closed"></span><svg><use href="#operation" /></svg>Copia di operation</td><td><svg><use href="#lamp" /></svg></td><td><i></i></td></tr>
                                <tr class="level1"><td><span class="closed"></span><svg><use href="#operation" /></svg>Copia di Copia di...</td><td><svg><use href="#lamp" /></svg></td><td><i></i></td></tr>
                            </tbody>
                        </table>
                        <div class="tree-scroll"><span></span><span></span></div>
                    </div>
                </div>
                <nav class="panel-tabs">
                    <button title="Layers"><svg><use href="#layers" /></svg></button>
                    <button title="Properties"><span class="wheel small"></span></button>
                    <button title="Display"><svg viewBox="0 0 20 20"><path fill="#b5b5b5" stroke="#111" stroke-width="2" d="M1 2h18v13H1z" /><path d="M7 15h6l1 4H6z" /></svg></button>
                    <button title="Help"><svg viewBox="0 0 20 20"><path fill="#fff" stroke="#444" stroke-width="1.500" d="M1 1h18v18H1z" /><path fill="#223c9a" d="M1 1h18v3H1z" /><circle cx="10" cy="12" r="7" fill="#4d69dc" /><path fill="none" stroke="#fff" stroke-width="1.500" d="M7 10q3-5 6-1 0 2-3 3v2M10 15v2" /></svg></button>
                    <button class="active" title="Machinings Tree"><svg><use href="#rlogo" /></svg></button>
                </nav>
            </div>
        </aside>
    </main>

    <footer class="statusbar">
        <button class="panel-toggle" aria-label="Left panel"></button>
        <button class="cplane">CPlane</button>
        <span class="coords">x 172.809 y 30.259 z 0</span>
        <span class="units">Millimeters</span>
        <button class="layer"><i></i>Livello 01</button>
        <button>Grid Snap</button>
        <button class="on">Ortho</button>
        <button>Planar</button>
        <button class="on">Osnap</button>
        <button>SmartTrack</button>
        <button class="on">Gumball (CPlane)</button>
        <button class="auto"><svg viewBox="0 0 12 17"><path fill="none" stroke="#888" stroke-width="1.500" d="M3 7V3q3-4 6 0v4M1 7h10v9H1z" /></svg>Auto CPlane (Object)</button>
        <button>Record History</button>
        <button class="on">Filter</button>
        <button>Minutes from last</button>
        <button class="panel-toggle right" aria-label="Right panel"></button>
    </footer>

    <script src="scene.js"></script>
</body>

</html>
```
FILE: styles.css
```css
* {
    box-sizing: border-box;
}

body {
    margin: 0;
    height: 100vh;
    display: flex;
    flex-direction: column;
    overflow: hidden;
    background-color: #d7d8dc;
    color: #333;
    font: 14px/20px "Open Sans", "Noto Sans", sans-serif;
}

h1,
h2,
h3,
p,
ul {
    margin: 0;
    padding: 0;
    font-size: 14px;
    font-weight: normal;
}

button,
input,
select {
    margin: 0;
    padding: 0;
    border: none;
    background: none;
    color: inherit;
    font: inherit;
}

button svg {
    display: block;
}

.defs {
    position: absolute;
    width: 0;
    height: 0;
}

/* title and menu */
.titlebar {
    display: flex;
    align-items: center;
    height: 29px;
    padding-left: 2px;
    background-color: #fff;
    color: #999;
}

.app-icon {
    width: 20px;
    height: 20px;
    margin-right: 5px;
}

.window-buttons {
    display: flex;
    margin-left: auto;
}

.window-buttons button {
    width: 58px;
    height: 29px;
    padding-left: 18px;
}

.window-buttons svg {
    width: 14px;
    height: 14px;
    fill: none;
    stroke: #888;
}

.window-buttons .dim {
    opacity: 0.4;
}

.menubar {
    display: flex;
    gap: 15px;
    height: 25px;
    padding: 1px 6px;
    background-color: #e9eaee;
}

.menubar a {
    color: #333;
    text-decoration: none;
}

/* command line */
.command {
    display: flex;
    height: 69px;
    padding: 0 3px 0 2px;
}

.grip {
    width: 12px;
    padding: 18px 0;
    border-right: 1px solid #d0d1d8;
    border-radius: 6px 0 0 6px;
    background: radial-gradient(circle, #b8b9be 1px, transparent 2px) center / 8px 8px repeat-y content-box, #e9eaee;
}

.command-main {
    flex: 1;
    display: flex;
    flex-direction: column;
    background-color: #fff;
    color: #111;
}

.history {
    height: 45px;
    padding: 5px 2px 0;
    border-bottom: 1px solid #c0c5d6;
}

.history p {
    white-space: pre;
}

.prompt {
    display: flex;
    gap: 6px;
    padding: 1px 2px;
    color: #000;
    font-weight: bold;
}

.prompt input {
    flex: 1;
}

.command-scroll {
    width: 18px;
    background-color: #fff;
}

/* toolbars */
.toolbars {
    display: flex;
    height: 66px;
    margin: 2px 3px 3px 2px;
}

.toolbars-main {
    flex: 1;
    background-color: #e9eaee;
}

.toolbar-tabs {
    display: flex;
    height: 24px;
    background-color: #d7d8dc;
    color: #6f7074;
}

.toolbar-tabs button {
    padding: 2px 13px 0 12px;
    white-space: nowrap;
}

.toolbar-tabs .active {
    padding-left: 14px;
    border-radius: 6px 6px 0 0;
    background-color: #e9eaee;
    color: #333;
}

.toolbar-tabs .options {
    margin-left: auto;
    padding: 0 6px;
    color: #bbb;
}

.options svg {
    width: 16px;
    height: 16px;
}

.tools {
    display: flex;
}

.tools button,
.palette button {
    position: relative;
    width: 35px;
    height: 35px;
    padding: 3px;
}

.tools svg,
.palette svg {
    width: 28px;
    height: 28px;
}

.more::after {
    content: "";
    position: absolute;
    right: -2px;
    bottom: 0;
    border-style: solid;
    border-width: 0 0 7px 8px;
    border-color: transparent transparent #666 transparent;
}

.wheel {
    display: block;
    width: 26px;
    height: 26px;
    border: 1px solid #222;
    border-radius: 50%;
    background: radial-gradient(circle, #fff 36%, transparent 39%), conic-gradient(#f00, #f0f, #00f, #0ff, #0f0, #ff0, #f00);
}

.wheel.small {
    width: 17px;
    height: 17px;
}

.help span {
    display: block;
    width: 25px;
    height: 26px;
    border-radius: 50%;
    background-color: #4664d4;
    color: #fff;
    font: bold 22px/26px "Liberation Serif", serif;
}

/* left column */
.workspace {
    flex: 1;
    display: flex;
    min-height: 0;
}

.sidebar {
    display: flex;
    flex-direction: column;
    width: 146px;
    margin: 0 4px 0 2px;
    border-radius: 6px 6px 0 0;
    background-color: #e9eaee;
}

.side-grip {
    height: 12px;
    padding: 0 57px;
    border-bottom: 1px solid #d0d1d8;
    background: radial-gradient(circle, #b8b9be 1px, transparent 2px) center / 8px 8px repeat-x content-box;
}

.palette {
    display: grid;
    grid-template-columns: repeat(4, 35px);
    height: 451px;
    align-content: start;
}

.palette .more::after {
    right: 0;
}

.osnap {
    flex: 1;
    border-top: 2px solid #d7d8dc;
}

.osnap h2,
.machinings h2 {
    display: flex;
    justify-content: space-between;
    align-items: center;
    height: 24px;
    padding: 0 6px;
    color: #6f7074;
}

.osnap h2 svg,
.machinings h2 svg {
    width: 14px;
    height: 14px;
    color: #bbb;
}

.osnap-tabs {
    display: flex;
    height: 26px;
    background-color: #d7d8dc;
}

.osnap-tabs button {
    width: 45px;
    padding-left: 11px;
}

.osnap-tabs .active {
    border-radius: 6px 6px 0 0;
    background-color: #e9eaee;
}

.osnap-tabs svg {
    width: 24px;
    height: 20px;
}

.osnap ul {
    padding: 5px 3px;
    list-style: none;
}

.osnap li {
    height: 20px;
}

.osnap label {
    display: flex;
    align-items: center;
    gap: 6px;
}

.osnap .disable {
    margin-top: 21px;
}

.osnap input {
    appearance: none;
    width: 16px;
    height: 15px;
    border: 1px solid #c0c5da;
    background-color: #fff;
}

.osnap input:checked::before {
    content: "";
    display: block;
    width: 14px;
    height: 13px;
    background-color: #222;
    clip-path: polygon(8% 48%, 24% 42%, 42% 66%, 82% 10%, 94% 22%, 46% 92%, 34% 92%);
}

/* viewport */
.views {
    flex: 1;
    display: flex;
    flex-direction: column;
    min-width: 0;
}

.viewport {
    position: relative;
    flex: 1;
    min-height: 0;
    border: solid #bcc2d2;
    border-width: 1px 1px 1px 0;
    background-color: #9ca3ab;
}

#scene {
    display: block;
    width: 100%;
    height: 100%;
}

#grid path {
    stroke: #92979f;
    stroke-width: 1;
}

#grid .major {
    stroke: #80858c;
}

.edges {
    fill: none;
    stroke: #cbd0ee;
    stroke-width: 2;
}

.edges .thin {
    stroke-width: 1;
}

#toolpath {
    fill: none;
    stroke: red;
    stroke-width: 1.5;
}

#toolpath .rapid {
    stroke: #fff;
    stroke-width: 1;
    stroke-dasharray: 2 2;
}

.axis path {
    fill: none;
    stroke: #666;
}

.axis text {
    fill: #666;
    font-size: 16px;
}

.view-name {
    position: absolute;
    left: 0;
    top: 0;
    display: flex;
    height: 23px;
    background-color: #869eef;
    color: #222;
    font-weight: bold;
    font-size: 13px;
}

.view-name span {
    padding: 1px 11px 0 10px;
}

.view-name i {
    width: 15px;
    margin: 2px 0;
    border-left: 1px solid #333;
}

.view-name i::before {
    content: "";
    display: block;
    margin: 7px 3px;
    border-style: solid;
    border-width: 5px 4px 0;
    border-color: #222 transparent;
}

.view-tabs {
    display: flex;
    height: 27px;
    color: #6f7074;
}

.view-tabs button {
    padding: 0 11px;
}

.view-tabs .active {
    padding: 0 10px 0 16px;
    border: solid #bcc2d8;
    border-width: 0 1px 1px 0;
    border-radius: 0 0 5px 5px;
    background-color: #e9eaee;
    color: #333;
}

.view-tabs svg {
    width: 12px;
    height: 12px;
    fill: none;
    stroke: #777;
}

/* tool dialog */
.dialog {
    position: absolute;
    left: 39px;
    top: 45px;
    display: flex;
    width: 699px;
    height: 723px;
    overflow: hidden;
    border-radius: 8px;
    background-color: #3d7fd3;
    color: #fff;
    font: 13px/20px "DejaVu Sans", sans-serif;
}

.dialog h3,
.dialog p {
    font-size: 13px;
}

.dialog svg {
    fill: none;
    stroke: #fff;
}

.dialog .solid {
    fill: #fff;
}

.steps {
    display: flex;
    flex-direction: column;
    gap: 9px;
    width: 74px;
    padding: 11px;
    background-color: #686664;
}

.steps button {
    width: 52px;
    height: 50px;
    border-left: 2px solid #8fd0dd;
    border-radius: 0 6px 6px 0;
    background: linear-gradient(90deg, #3f77a5, #5a87cc);
}

.steps .active {
    border-color: #fff;
    background: linear-gradient(90deg, #74b2d3, #b5e2f7);
}

.steps text {
    fill: #fff;
    stroke: none;
    font-size: 11px;
}

.dialog-main {
    flex: 1;
    padding: 10px 9px;
}

.dialog header {
    display: flex;
    gap: 10px;
    padding: 0 1px;
}

.dialog h2 {
    flex: 1;
    height: 22px;
    background-color: #fff;
    color: #0f5cb0;
    font: 20px/22px "DejaVu Sans Condensed", "DejaVu Sans", sans-serif;
    text-align: center;
}

.close {
    width: 23px;
    height: 23px;
    border-radius: 5px;
    background: linear-gradient(#74b8b8, #3b8eba);
}

.close path {
    stroke-width: 4;
}

.dialog-body {
    display: flex;
    margin-top: 7px;
}

.field {
    width: 32px;
    height: 24px;
    padding: 0 3px;
    border: 1px solid #777;
    background-color: #fff;
    color: #3d7fd3;
    font-size: 12px;
}

.sketch {
    display: flex;
    flex-direction: column;
    align-items: flex-start;
    width: 196px;
    padding: 57px 0 0 11px;
}

.sketch > .field {
    margin: 50px 0 0 71px;
}

.cutter {
    display: flex;
    align-items: center;
}

.cutter .field {
    margin-bottom: 5px;
}

.cutter svg {
    width: 80px;
    height: 176px;
}

.cutter .dimension {
    stroke: #000;
}

.cutter .arrows {
    fill: #000;
    stroke: #000;
}

.tree-buttons {
    display: flex;
    gap: 27px;
    margin: 209px 0 0 32px;
}

.tree-buttons button,
.actions button {
    width: 42px;
    height: 42px;
    border-radius: 6px;
    background: linear-gradient(#74b8b8, #3b8eba);
}

.params {
    flex: 1;
    height: 579px;
    padding: 11px 11px 0;
    background-color: #4b7592;
}

.dropdown {
    position: relative;
    height: 20px;
    margin: 0 -5px;
    background-color: #fff;
    color: #3d7fd3;
}

.dropdown::after {
    content: "";
    position: absolute;
    right: 1px;
    top: 5px;
    border-style: solid;
    border-width: 11px 8px 0;
    border-color: #1b86e6 transparent;
    pointer-events: none;
}

.dropdown select {
    appearance: none;
    width: 100%;
    height: 20px;
    padding: 0 4px;
}

.dropdown.coolant {
    width: 126px;
    margin: 0;
}

.coolant select {
    direction: rtl;
    padding: 0 20px 0 1px;
}

.row {
    display: flex;
    align-items: center;
    gap: 7px;
    height: 31px;
}

.row.first {
    margin-top: 18px;
}

.row.low {
    height: 29px;
}

.row label {
    flex: 1;
}

.row .wide {
    width: 124px;
}

.field.number {
    width: 50px;
}

.field.full {
    width: 124px;
}

.field.group {
    width: 154px;
}

.field.locked {
    width: 75px;
    height: 22px;
    border-color: #fff;
    background-color: #9cb5cd;
    color: #fff;
}

.params h3 {
    height: 38px;
    padding-top: 17px;
    text-align: center;
}

.dots {
    width: 28px;
    height: 19px;
    border-radius: 5px;
    background: linear-gradient(#74b8b8, #3b8eba);
}

.advanced {
    width: 383px;
    height: 16px;
    border-radius: 5px;
    background: linear-gradient(#74b8b8, #3b8eba);
    line-height: 16px;
}

.params p {
    height: 25px;
    padding-top: 2px;
}

.actions {
    display: flex;
    gap: 9px;
    padding: 10px 9px 0;
}

.actions button {
    width: 48px;
    height: 48px;
}

.spacer {
    flex: 1;
}

.dialog .param-set {
    padding: 15px 3px;
    font: 16px/20px "DejaVu Sans Condensed", "DejaVu Sans", sans-serif;
}

/* machinings tree */
.machinings {
    display: flex;
    flex-direction: column;
    width: 426px;
    margin: 0 2px 0 4px;
}

.machinings h2 {
    border-radius: 6px 6px 0 0;
    background-color: #e9eaee;
}

.machinings-body {
    flex: 1;
    display: flex;
    min-height: 0;
    padding-top: 1px;
}

.tree-panel {
    flex: 1;
    display: flex;
    flex-direction: column;
    padding: 14px;
    border: solid #fff;
    border-width: 1px 2px 2px 1px;
    border-right-color: #666;
    border-bottom-color: #666;
    background-color: #f0f0f0;
}

.tree-tools {
    display: flex;
    gap: 14px;
}

.tree-tools button {
    width: 25px;
    height: 24px;
    background-color: #cbcbcb;
    box-shadow: inset 0 0 0 1px #bbb;
    color: #666;
}

.tree-tools svg {
    fill: none;
    stroke: #777;
}

.tree-tools b {
    display: block;
    height: 20px;
    margin: 2px;
    border: 1px solid #777;
    font: 20px/18px "Liberation Serif", serif;
}

.tree-tools .small-lamp {
    width: 25px;
    height: 20px;
}

.tree-tools .small-logo {
    width: 25px;
    height: 20px;
    stroke: none;
}

.tree {
    flex: 1;
    display: flex;
    flex-direction: column;
    justify-content: space-between;
    margin-top: 9px;
    border: 1px solid #828790;
}

.tree table {
    width: 100%;
    table-layout: fixed;
    border-collapse: collapse;
    color: #000;
    font: 22px/30px "DejaVu Sans Condensed", "DejaVu Sans", sans-serif;
}

.tree th {
    height: 30px;
    padding: 0;
    border-right: 1px solid #ddd;
    background-color: #fff;
}

.tree th:nth-child(2) {
    width: 49px;
}

.tree th:last-child {
    width: 38px;
    border-right: none;
}

.tree td {
    height: 30px;
    padding: 0;
    white-space: nowrap;
}

.tree td svg {
    width: 22px;
    height: 22px;
    margin-right: 7px;
    vertical-align: -4px;
}

.tree td + td {
    padding-right: 16px;
    text-align: center;
    font-size: 0;
}

.tree td:last-child {
    padding-right: 6px;
}

.tree td + td svg {
    height: 24px;
    margin: 0;
    vertical-align: middle;
}

.tree td i {
    display: inline-block;
    width: 17px;
    height: 17px;
    border: 1px solid #999;
    border-radius: 50%;
    background-color: #d5d5d5;
    vertical-align: middle;
}

.tree td span {
    display: inline-block;
    width: 29px;
}

.tree td span::before {
    display: block;
    width: 6px;
    height: 6px;
    margin-left: 7px;
    border: solid #444;
    border-width: 0 2px 2px 0;
}

.tree td .open::before {
    content: "";
    transform: translateY(-6px) rotate(45deg);
}

.tree td .closed::before {
    content: "";
    margin-left: 6px;
    border-color: #999;
    transform: translateY(-4px) rotate(-45deg);
}

.level1 td:first-child {
    padding-left: 25px;
}

.level2 td:first-child {
    padding-left: 50px;
}

.level3 td:first-child {
    padding-left: 75px;
}

.tree-scroll {
    display: flex;
    justify-content: space-between;
    height: 21px;
    padding: 6px;
    border-top: 1px solid #fff;
}

.tree-scroll span {
    width: 8px;
    height: 8px;
    border: solid #b0b0b0;
    border-width: 0 0 2px 2px;
    transform: rotate(45deg);
}

.tree-scroll span:last-child {
    transform: rotate(225deg);
}

.panel-tabs {
    width: 30px;
    border-left: 5px solid #e9eaee;
}

.panel-tabs button {
    display: block;
    width: 25px;
    height: 45px;
    padding: 0 3px 2px;
    color: #0f5c99;
}

.panel-tabs svg {
    width: 18px;
    height: 18px;
}

.panel-tabs .active {
    border-radius: 0 6px 6px 0;
    background-color: #e9eaee;
}

/* status bar */
.statusbar {
    display: flex;
    align-items: center;
    height: 28px;
    padding: 0 10px 0 9px;
    background-color: #e9eaee;
    color: #555;
    white-space: nowrap;
}

.statusbar button {
    height: 24px;
    padding: 0 8px;
    border-radius: 4px;
}

.statusbar .on {
    margin: 0 8px;
    padding: 0 10px;
    background-color: #d0d8ee;
    color: #222;
    font-size: 13px;
    font-weight: bold;
}

.statusbar .panel-toggle {
    width: 17px;
    height: 17px;
    padding: 0;
    border: solid #444;
    border-width: 2px 2px 2px 7px;
    border-radius: 0;
}

.statusbar .panel-toggle.right {
    margin-left: auto;
    border-width: 2px 7px 2px 2px;
}

.statusbar .cplane {
    width: 160px;
    margin-left: 18px;
    text-align: left;
}

.coords {
    width: 262px;
}

.units {
    width: 104px;
}

.statusbar .layer {
    display: flex;
    align-items: center;
    gap: 7px;
    width: 240px;
    padding: 0;
}

.layer i {
    width: 20px;
    height: 20px;
    background-color: #000;
}

.statusbar .auto {
    display: flex;
    align-items: center;
    gap: 12px;
    margin-right: 20px;
    padding-left: 11px;
}

.auto svg {
    width: 12px;
    height: 17px;
}
```
FILE: scene.js
```js
const NS = 'http://www.w3.org/2000/svg';

function addPath(parent, d, className) {
    const path = document.createElementNS(NS, 'path');
    path.setAttribute('d', d);
    if (className) {
        path.setAttribute('class', className);
    }
    parent.appendChild(path);
}

// construction grid, near corner at 816,1027
function drawGrid() {
    const grid = document.getElementById('grid');
    for (let i = 24; i >= 0; i--) {
        const t = i / 24;
        const className = i % 5 === 0 ? 'major' : '';
        addPath(grid, `M${816 + 64 * t} ${1027 - 75 * t}l-190 -75`, className);
    }
    for (let i = 48; i >= 0; i--) {
        const t = i / 48;
        const className = i % 5 === 0 ? 'major' : '';
        addPath(grid, `M${816 - 190 * t} ${1027 - 75 * t}l64 -75`, className);
    }
}

function drawToolpath() {
    const group = document.getElementById('toolpath');

    // one contour per depth, the last ones run out further
    for (let i = 0; i <= 42; i++) {
        const y = i * 4.1;
        const left = `M880 ${784 + y}L952 ${762 + y}Q961 ${759 + y} 962 ${772 + y}`;
        if (i < 35) {
            const x = 1046 - y * 0.09;
            addPath(group, `${left}L965 ${808 + y}C970 ${835 + y} 1000 ${838 + y} ${x - 16} ${853 + y}Q${x + 1} ${862 + y} ${x} ${885 + y}`);
        } else {
            addPath(group, `${left}L962 ${808 + y}C965 ${838 + y} 990 ${840 + y} 1003 ${853 + y}Q1020 ${868 + y} 1018 ${883 + y}L1012 1076`);
        }
    }

    // wall of stacked passes along both corners
    for (let i = 0; i < 6; i++) {
        addPath(group, `M${1042 + i} ${868 + i * 3}L${1030 + i} ${1030 + i * 2}L${1029 + i / 2} ${1064 - i * 2}`);
        addPath(group, `M${957 + i} ${770 + i * 8}L${956 + i} ${980 + i * 4}`);
    }
    addPath(group, 'M786 955v16M793 955q3 20 1 38M796 955q1 10-2 38');

    // rapid moves
    for (let x = 888; x < 1038; x += 5) {
        const top = 779 + (x - 888) * 0.3;
        const bottom = 963 + (x - 888) * 0.36;
        addPath(group, `M${x} ${top}L${x - 3} ${bottom}`, 'rapid');
    }
    addPath(group, 'M1048 807L1042 880', 'rapid');
    addPath(group, 'M1016 1010L1011 1076', 'rapid');
}

drawGrid();
drawToolpath();
```
